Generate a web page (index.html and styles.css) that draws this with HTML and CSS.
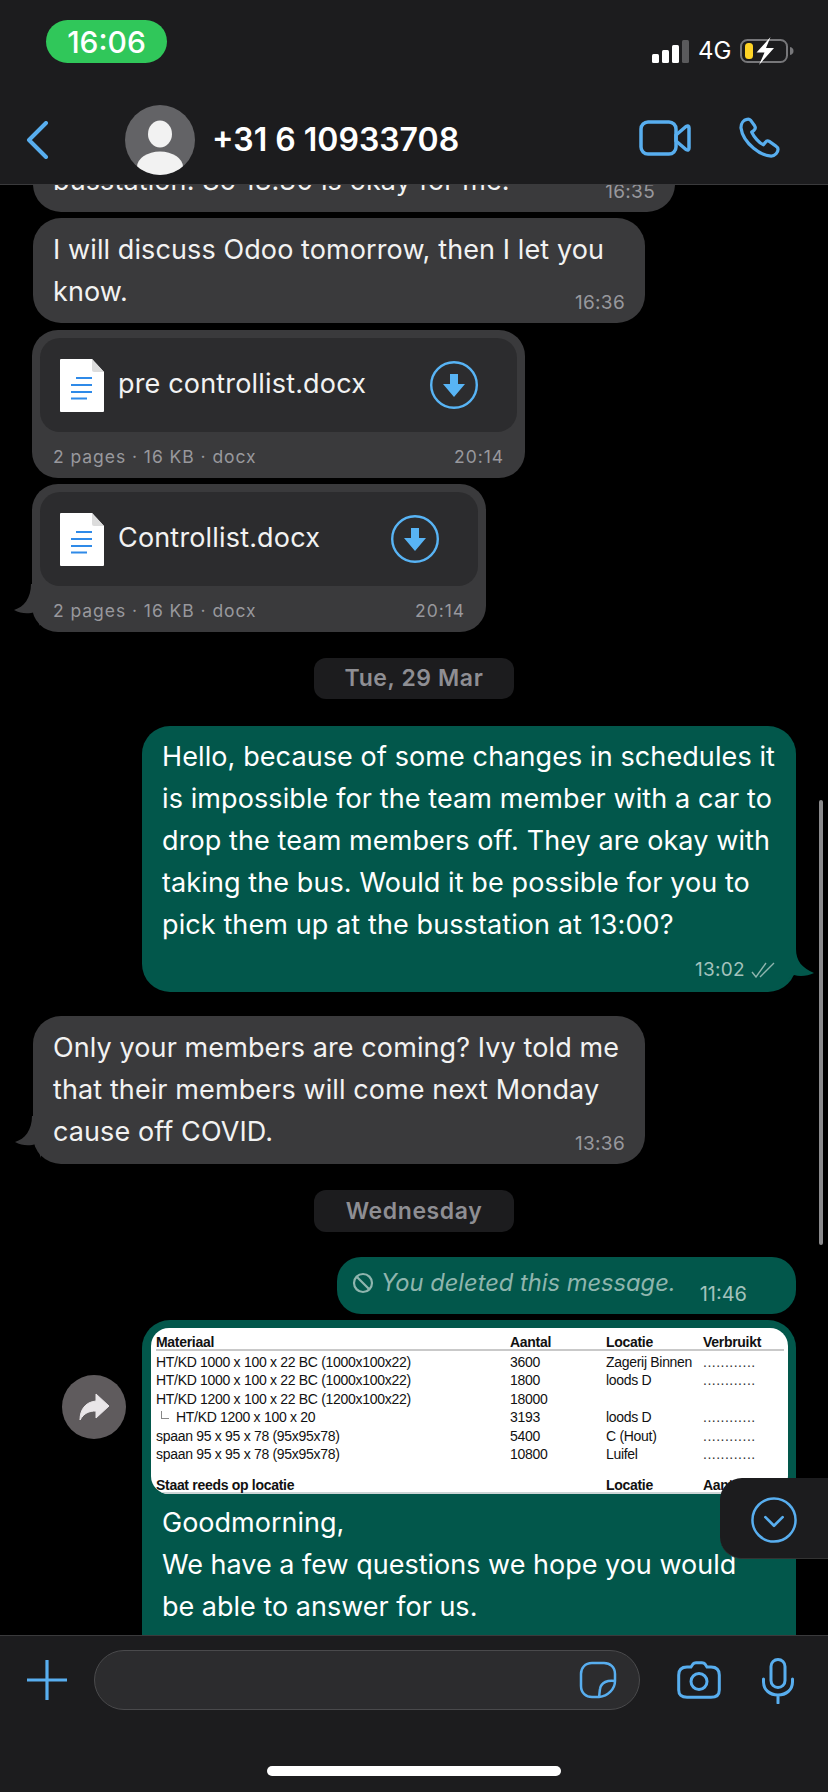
FILE: index.html
```html
<!DOCTYPE html>
<html lang="en">
<head>
<meta charset="utf-8">
<title>Chat</title>
<link rel="stylesheet" href="styles.css">
</head>
<body>
<div class="screen">
  <header class="top">
    <div class="status">
      <div class="clock">16:06</div>
      <div class="status-right">
        <svg class="signal" viewBox="0 0 37 23"><rect x="0" y="14" width="7" height="9" rx="1.5" fill="#fff"/><rect x="10" y="10" width="7" height="13" rx="1.5" fill="#fff"/><rect x="20" y="5" width="7" height="18" rx="1.5" fill="#fff"/><rect x="30" y="0" width="7" height="23" rx="1.5" fill="#5a5a5c"/></svg>
        <span class="net">4G</span>
        <svg class="battery" viewBox="0 0 54 28"><rect x="1" y="3" width="46" height="22" rx="6.5" fill="none" stroke="#77777a" stroke-width="2"/><path d="M50 10c2.500.6 3.500 2 3.500 4S52.500 17.500 50 18z" fill="#77777a"/><rect x="5" y="6" width="8" height="16" rx="3.500" fill="#ffd426"/><path d="M30.500 0 L16.500 15.500 H24.500 L19 28 L34 11 H26 Z" fill="#fff"/></svg>
      </div>
    </div>
    <div class="nav">
      <svg class="back" viewBox="0 0 24 38"><path d="M21 2 L4 19 L21 36" fill="none" stroke="#58aeef" stroke-width="4" stroke-linecap="round" stroke-linejoin="round"/></svg>
      <svg class="avatar" viewBox="0 0 70 70"><defs><clipPath id="av"><circle cx="35" cy="35" r="35"/></clipPath></defs><circle cx="35" cy="35" r="35" fill="#636366"/><g clip-path="url(#av)"><ellipse cx="35" cy="29" rx="12" ry="13.500" fill="#f2f2f2"/><ellipse cx="35" cy="62" rx="23" ry="15.500" fill="#f2f2f2"/></g></svg>
      <div class="title">+31 6 10933708</div>
      <svg class="video" viewBox="0 0 52 36"><rect x="2" y="2" width="35" height="32" rx="7" fill="none" stroke="#58aeef" stroke-width="3.500"/><path d="M37 15 L47 6.500 Q50 5 50 8 V28 Q50 31 47 29.500 L37 21 Z" fill="none" stroke="#58aeef" stroke-width="3.500" stroke-linejoin="round"/></svg>
      <svg class="phone" viewBox="0 0 42 42"><path d="M8 2.500 C5 3 2 6 2 11 C3 19 9 27 15 32 C21 37 28 40 33 40 C37 40 40 36 40 33 C40 31.500 39 30.500 37.500 29.500 L31 25 C29.500 24 28 24.500 27 26 L25 28.500 C21 27 15 20 13 15.500 L15.500 13.500 C17 12 17 10.500 16 9 L12 3.500 C11 2.500 9.500 2 8 2.500 Z" fill="none" stroke="#58aeef" stroke-width="3.300" stroke-linejoin="round"/></svg>
    </div>
  </header>

  <main class="chat">
    <div class="bubble in first">
      <p class="msg">busstation. So 13:30 is okay for me.</p>
      <span class="time">16:35</span>
    </div>
    <div class="bubble in next b2">
      <p class="msg">I will discuss Odoo tomorrow, then I let you<br>know.</p>
      <span class="time">16:36</span>
    </div>
    <div class="doc doc-a">
      <div class="doc-main">
        <svg class="doc-icon" viewBox="0 0 44 53"><path d="M1 0 H32 L44 13 V52 Q44 53 43 53 H1 Q0 53 0 52 V1 Q0 0 1 0 Z" fill="#fff"/><path d="M32 0 L44 13 H34 Q32 13 32 11 Z" fill="#dcdcdc"/><path d="M16 19 H32 M11 26 H32 M11 33 H32 M11 39.500 H27" stroke="#2f8ae8" stroke-width="2"/></svg>
        <span class="doc-name">pre controllist.docx</span>
        <svg class="dl" viewBox="0 0 48 48"><circle cx="24" cy="24" r="22.800" fill="none" stroke="#58b4f5" stroke-width="2.400"/><path d="M20 13 H28 V23 H35 L24 36 L13 23 H20 Z" fill="#58b4f5"/></svg>
      </div>
      <div class="doc-foot"><span>2 pages · 16 KB · docx</span><span>20:14</span></div>
    </div>
    <div class="doc doc-b">
      <svg class="tail-l" viewBox="0 0 26 42"><path d="M17 0 C17 14 10 23 0 26 C7 30 15 30 21 28 L26 42 V0 Z" fill="#3a3a3c"/></svg>
      <div class="doc-main">
        <svg class="doc-icon" viewBox="0 0 44 53"><path d="M1 0 H32 L44 13 V52 Q44 53 43 53 H1 Q0 53 0 52 V1 Q0 0 1 0 Z" fill="#fff"/><path d="M32 0 L44 13 H34 Q32 13 32 11 Z" fill="#dcdcdc"/><path d="M16 19 H32 M11 26 H32 M11 33 H32 M11 39.500 H27" stroke="#2f8ae8" stroke-width="2"/></svg>
        <span class="doc-name">Controllist.docx</span>
        <svg class="dl" viewBox="0 0 48 48"><circle cx="24" cy="24" r="22.800" fill="none" stroke="#58b4f5" stroke-width="2.400"/><path d="M20 13 H28 V23 H35 L24 36 L13 23 H20 Z" fill="#58b4f5"/></svg>
      </div>
      <div class="doc-foot"><span>2 pages · 16 KB · docx</span><span>20:14</span></div>
    </div>

    <div class="date date-a">Tue, 29 Mar</div>

    <div class="bubble out b-out">
      <svg class="tail-r" viewBox="0 0 26 42"><path d="M8 0 C8 12 14 19 26 24 C20 27 12 28 6 26 L0 30 V0 Z" fill="#02574b"/></svg>
      <p class="msg">Hello, because of some changes in schedules it<br>is impossible for the team member with a car to<br>drop the team members off. They are okay with<br>taking the bus. Would it be possible for you to<br>pick them up at the busstation at 13:00?</p>
      <span class="time time-out">13:02
        <svg class="ticks" viewBox="0 0 24 16"><path d="M1 10 L5 15 L15 1 M9 15 L23 1" fill="none" stroke="#8fb5ae" stroke-width="1.400"/></svg>
      </span>
    </div>

    <div class="bubble in b3">
      <svg class="tail-l" viewBox="0 0 26 42"><path d="M17 0 C17 14 10 23 0 26 C7 30 15 30 21 28 L26 42 V0 Z" fill="#3a3a3c"/></svg>
      <p class="msg">Only your members are coming? Ivy told me<br>that their members will come next Monday<br>cause off COVID.</p>
      <span class="time">13:36</span>
    </div>

    <div class="date date-b">Wednesday</div>

    <div class="bubble out deleted">
      <svg class="ban" viewBox="0 0 22 22"><circle cx="11" cy="11" r="9" fill="none" stroke="#8fb5ae" stroke-width="2.200"/><path d="M5 5 L17 17" stroke="#8fb5ae" stroke-width="2.200"/></svg>
      <em class="del-text">You deleted this message.</em>
      <span class="del-time">11:46</span>
    </div>

    <div class="media-row">
      <div class="fwd">
        <svg viewBox="0 0 30 28"><path d="M17 1 L30 13 L17 25 V18 C10 18 5 20 1 27 C1 17 6 9 17 8 Z" fill="#e9e6e8" stroke="#e9e6e8" stroke-width="1" stroke-linejoin="round"/></svg>
      </div>
      <div class="media">
        <div class="sheet">
          <div class="tbl head"><span>Materiaal</span><span>Aantal</span><span>Locatie</span><span>Verbruikt</span></div>
          <div class="tbl"><span>HT/KD 1000 x 100 x 22 BC (1000x100x22)</span><span>3600</span><span>Zagerij Binnen</span><span class="dots">............</span></div>
          <div class="tbl"><span>HT/KD 1000 x 100 x 22 BC (1000x100x22)</span><span>1800</span><span>loods D</span><span class="dots">............</span></div>
          <div class="tbl"><span>HT/KD 1200 x 100 x 22 BC (1200x100x22)</span><span>18000</span><span></span><span></span></div>
          <div class="tbl"><span class="sub">HT/KD 1200 x 100 x 20</span><span>3193</span><span>loods D</span><span class="dots">............</span></div>
          <div class="tbl"><span>spaan 95 x 95 x 78 (95x95x78)</span><span>5400</span><span>C (Hout)</span><span class="dots">............</span></div>
          <div class="tbl"><span>spaan 95 x 95 x 78 (95x95x78)</span><span>10800</span><span>Luifel</span><span class="dots">............</span></div>
          <div class="tbl head foot"><span>Staat reeds op locatie</span><span></span><span>Locatie</span><span>Aantal</span></div>
        </div>
        <p class="msg media-text">Goodmorning,<br>We have a few questions we hope you would<br>be able to answer for us.</p>
      </div>
    </div>

    <div class="scrollbar"></div>
    <div class="down">
      <svg viewBox="0 0 48 48"><circle cx="24" cy="24" r="22.500" fill="none" stroke="#58aeef" stroke-width="2.600"/><path d="M15 21 L24 30 L33 21" fill="none" stroke="#58aeef" stroke-width="2.800" stroke-linecap="round" stroke-linejoin="round"/></svg>
    </div>
  </main>

  <footer class="bottom">
    <div class="composer">
      <svg class="plus" viewBox="0 0 40 40"><path d="M20 0.500 V39.500 M0.500 20 H39.500" stroke="#58aeef" stroke-width="3.200" stroke-linecap="round"/></svg>
      <div class="input">
        <svg class="sticker" viewBox="0 0 38 38"><path d="M36 20 V13 C36 6 31 2 25 2 H13 C6 2 2 7 2 13 V25 C2 32 7 36 13 36 H20 C29 35 36 28 36 20 Z M36 20 C29 19 22 21 21 28 C20.500 31 20.500 33.500 20 36" fill="none" stroke="#58aeef" stroke-width="2.500" stroke-linejoin="round"/></svg>
      </div>
      <svg class="camera" viewBox="0 0 44 38"><path d="M14 6 L16 3 Q17 1.700 19 1.700 H25 Q27 1.700 28 3 L30 6 H34 Q42.300 6 42.300 14 V29 Q42.300 36.300 34 36.300 H10 Q1.700 36.300 1.700 29 V14 Q1.700 6 10 6 Z" fill="none" stroke="#58aeef" stroke-width="3"/><circle cx="22" cy="20.500" r="8" fill="none" stroke="#58aeef" stroke-width="3"/></svg>
      <svg class="mic" viewBox="0 0 32 46"><rect x="9" y="1.500" width="14" height="28" rx="7" fill="none" stroke="#58aeef" stroke-width="3"/><path d="M1.500 21 V24 C1.500 32 8 37 16 37 C24 37 30.500 32 30.500 24 V21 M16 37 V45" fill="none" stroke="#58aeef" stroke-width="3" stroke-linecap="round"/></svg>
    </div>
    <div class="home"></div>
  </footer>
</div>
</body>
</html>
```
FILE: styles.css
```css
* { box-sizing: border-box; }
html, body { margin: 0; padding: 0; background: #000; }
body { font-family: Inter, "Noto Sans", "Liberation Sans", sans-serif; color: #fff; }
svg { display: block; flex: none; }
p { margin: 0; }

.screen { width: 828px; height: 1792px; display: flex; flex-direction: column; overflow: hidden; }

.top { height: 185px; flex: none; background: #1c1c1e; border-bottom: 1px solid #3a3a3c; position: relative; z-index: 2; padding-top: 20px; }
.status { display: flex; justify-content: space-between; align-items: flex-start; padding: 0 34px 0 46px; height: 84px; }
.clock { width: 121px; height: 43px; background: #30c75a; border-radius: 22px; font-size: 30px; font-weight: 500; line-height: 45px; text-align: center; }
.status-right { display: flex; align-items: center; margin-top: 17px; }
.signal { width: 37px; height: 23px; }
.net { font-size: 24px; line-height: 26px; margin-left: 9px; width: 42px; }
.battery { width: 54px; height: 28px; }

.nav { display: flex; align-items: center; height: 71px; padding: 0 48px 0 25px; }
.back { width: 24px; height: 38px; margin-right: 76px; }
.avatar { width: 70px; height: 70px; margin-right: 17px; }
.title { font-size: 32px; font-weight: 600; line-height: 73px; flex: 1; white-space: nowrap; }
.video { width: 52px; height: 36px; margin: -3px 48px 0 0; }
.phone { width: 41px; height: 41px; margin-top: -4px; }

.chat { flex: 1; min-height: 0; position: relative; overflow: hidden; display: flex; flex-direction: column; align-items: flex-start; padding: 0 32px; }

.bubble { position: relative; border-radius: 28px; font-size: 27px; line-height: 42px; flex: none; }
.msg { white-space: nowrap; letter-spacing: .1px; }
.in { background: #3a3a3c; color: #f2f2f2; padding: 11px 20px 10px; margin-left: 1px; }
.out { background: #02574b; align-self: flex-end; }
.first { width: 642px; margin-top: -41px; height: 68px; padding-top: 16px; }
.next { margin-top: 6px; }
.b2 { width: 612px; height: 105px; }
.time { position: absolute; right: 20px; bottom: 9px; font-size: 19px; line-height: 22px; color: #98989d; letter-spacing: .3px; }

.doc { position: relative; flex: none; background: #3a3a3c; border-radius: 26px; padding: 8px 8px 0; height: 148px; }
.doc-a { width: 493px; margin-top: 7px; }
.doc-b { width: 454px; margin-top: 6px; }
.doc-main { display: flex; align-items: center; height: 94px; background: #2c2c2e; border-radius: 20px; padding: 0 39px 0 20px; }
.doc-icon { width: 44px; height: 53px; }
.doc-name { font-size: 27px; letter-spacing: .17px; margin: -4px 0 0 14px; color: #f2f2f2; flex: 1; white-space: nowrap; }
.dl { width: 48px; height: 48px; }
.doc-foot { display: flex; justify-content: space-between; padding: 14px 13px 0 13px; font-size: 17.500px; line-height: 22px; letter-spacing: .95px; color: #98989d; }

.tail-l { position: absolute; left: -18px; bottom: 6px; width: 26px; height: 42px; }
.tail-r { position: absolute; right: -18px; bottom: 1px; width: 26px; height: 42px; }

.date { align-self: center; flex: none; width: 200px; text-align: center; background: #1c1c1e; border-radius: 12px; color: #8e8e93; font-weight: 600; font-size: 23px; letter-spacing: .6px; }
.date-a { height: 41px; line-height: 41px; margin-top: 26px; }
.date-b { height: 42px; line-height: 42px; margin-top: 26px; }

.b-out { width: 654px; height: 266px; margin-top: 27px; padding: 10px 20px; }
.time-out { right: 21px; bottom: 11px; color: #a3c2bc; display: flex; align-items: center; gap: 6px; }
.ticks { width: 24px; height: 16px; }
.b3 { width: 612px; height: 148px; margin-top: 24px; }

.deleted { width: 459px; height: 57px; margin-top: 25px; border-radius: 24px; display: flex; align-items: center; padding: 0 49px 0 15px; }
.ban { width: 22px; height: 22px; margin-top: -5px; }
.del-text { font-size: 23.700px; color: #8fb5ae; margin: -5px 0 0 7px; white-space: nowrap; }
.del-time { font-size: 20px; line-height: 22px; color: #a3c2bc; margin: 16px 0 0 auto; }

.media-row { display: flex; align-self: flex-end; align-items: flex-start; gap: 16px; margin-top: 6px; flex: none; }
.fwd { width: 64px; height: 64px; border-radius: 50%; background: #5f5b5d; display: flex; align-items: center; justify-content: center; margin-top: 55px; }
.fwd svg { width: 30px; height: 28px; }
.media { width: 654px; height: 400px; background: #02574b; border-radius: 28px 28px 0 0; padding: 8px 8px 0 9px; }
.sheet { height: 166px; background: #fff; border-radius: 18px; color: #111; font-family: "Liberation Sans", Arial, sans-serif; font-size: 14px; letter-spacing: -.3px; padding: 5px 4px 0 5px; overflow: hidden; }
.tbl { display: grid; grid-template-columns: 354px 96px 97px 1fr; height: 18.400px; line-height: 18.400px; white-space: nowrap; }
.head { font-weight: 700; border-bottom: 2px solid #c9c9c9; height: 18px; margin-bottom: 2px; }
.foot { margin-top: 13px; margin-bottom: 0; border-bottom-color: #cdd6d6; }
.sub { padding-left: 20px; position: relative; }
.sub::before { content: ""; position: absolute; left: 5px; top: 3px; width: 7px; height: 7px; border-left: 1px solid #888; border-bottom: 1px solid #888; }
.dots { color: #333; letter-spacing: .5px; }
.media-text { padding: 8px 0 0 11px; color: #fff; font-size: 27px; line-height: 42px; letter-spacing: 0; }

.scrollbar { position: absolute; left: 819px; top: 615px; width: 4px; height: 445px; border-radius: 2px; background: #8a8a8c; }
.down { position: absolute; left: 720px; top: 1293px; width: 108px; height: 81px; background: #1c1c1e; border-radius: 22px 0 0 22px; border-bottom: 1px solid #333; display: flex; align-items: center; justify-content: center; padding-top: 3px; }
.down svg { width: 46px; height: 46px; }

.bottom { height: 157px; flex: none; background: #1c1c1e; border-top: 1px solid #3a3a3c; position: relative; z-index: 2; padding-top: 14px; }
.composer { display: flex; align-items: center; height: 60px; padding-left: 27px; }
.plus { width: 40px; height: 40px; margin-right: 27px; }
.input { width: 546px; height: 60px; border-radius: 30px; background: #2c2c2e; border: 1px solid #4a4a4c; display: flex; align-items: center; justify-content: flex-end; padding-right: 22px; margin-right: 37px; }
.sticker { width: 38px; height: 38px; }
.camera { width: 44px; height: 38px; margin-right: 41px; }
.mic { width: 32px; height: 46px; margin-top: 1px; }
.home { width: 294px; height: 10px; border-radius: 5px; background: #fff; margin: 56px 0 0 267px; }
```
